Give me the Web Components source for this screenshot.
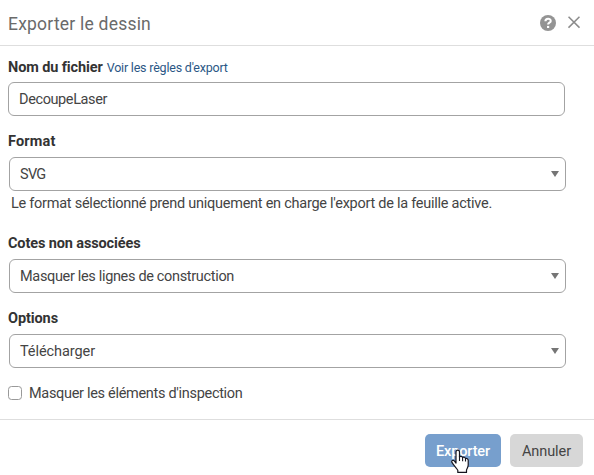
<!DOCTYPE html>
<html lang="fr">
<head>
<meta charset="utf-8">
<title>Exporter le dessin</title>
<style>
html,body{margin:0;background:#fff}
body{width:594px;height:475px;overflow:hidden;font-family:Roboto,"Liberation Sans",sans-serif;font-size:14.5px;color:#444}
</style>
</head>
<body>
<export-dialog></export-dialog>
<script>
const define = (name, html, ready) => customElements.define(name, class extends HTMLElement {
  constructor() {
    super();
    const t = document.createElement('template');
    t.innerHTML = html;
    this.attachShadow({mode: 'open'}).append(t.content.cloneNode(true));
  }
  connectedCallback() { if (ready) ready(this, this.shadowRoot); }
});

/* One line of text whose tracking is adjusted to occupy the width given in "w". */
define('fit-text', `<style>
:host{display:inline-block;white-space:nowrap;height:20px;line-height:22px}
span{display:inline-block}
</style><span><slot></slot></span>`, (el, root) => {
  const s = root.querySelector('span');
  const w = +el.getAttribute('w');
  const n = el.textContent.length;
  s.style.letterSpacing = ((w - s.getBoundingClientRect().width) / n) + 'px';
});

define('dialog-header', `<style>
:host{display:flex;box-sizing:border-box;height:46px;border-bottom:1px solid #dedede;padding:0 14px 0 8px;align-items:center;color:#6a6a6a;font-size:17.5px}
.icons{margin-left:auto;display:flex;gap:12px;align-items:center}
svg{display:block}
</style><slot></slot><div class="icons">
<svg width="16" height="16" viewBox="0 0 16 16"><circle cx="8" cy="8" r="8" fill="#949494"/><path d="M5.4 6.2C5.5 2.9 10.7 3 10.7 5.9C10.7 7.8 8.1 7.6 8.1 9.6" fill="none" stroke="#fff" stroke-width="2.1"/><rect x="7" y="10.9" width="2.2" height="2.1" fill="#fff"/></svg>
<svg width="12" height="14" viewBox="0 0 12 14"><path d="M.5.7 11.5 11.7M11.5.7.5 11.7" stroke="#8c8c8c" stroke-width="1.6"/></svg>
</div>`);

define('field-label', `<style>
:host{display:flex;height:20px;gap:4px;font-weight:700;color:#333}
::slotted([slot=link]){font-weight:400;font-size:12.5px;color:#2b5785}
</style><slot></slot><slot name="link"></slot>`);

define('text-field', `<style>
:host{display:flex;box-sizing:border-box;width:557px;height:34px;border:1px solid #a3a3a3;border-radius:6px;padding:0 10px;align-items:center;background:#fff}
</style><slot></slot>`);

define('select-field', `<style>
:host{display:flex;box-sizing:border-box;width:557px;height:34px;margin-left:1px;border:1px solid #a3a3a3;border-radius:6px;padding:0 6px 0 10px;align-items:center;justify-content:space-between;background:#fff}
</style><slot></slot><svg width="8" height="6" viewBox="0 0 8 6"><path d="M0 0H8L4 6Z" fill="#757575"/></svg>`);

define('check-field', `<style>
:host{display:flex;height:20px;align-items:center;gap:7px}
i{box-sizing:border-box;width:14px;height:14px;border:1px solid #999;border-radius:3.5px;background:#fff}
</style><i></i><slot></slot>`);

define('action-button', `<style>
:host{display:flex;box-sizing:border-box;width:73px;height:33px;border-radius:5px;background:#d7d7d7;align-items:center;justify-content:center;position:relative}
:host([primary]){width:76px;background:#779fcd;color:#fff;font-weight:500}
::slotted(hand-cursor){position:absolute;left:26px;top:15px}
</style><slot></slot>`);

define('hand-cursor', `<style>:host{display:block}svg{display:block}</style>
<svg width="18" height="25" viewBox="0 0 18 25"><path d="M5 14V3.1C5 .4 8.5.4 8.5 3.1V8C9.4 6.8 11.4 7.2 11.6 8.7C12.6 7.7 14.3 8.3 14.5 9.7C15.8 8.9 17.2 9.8 17.2 11.3V16.1C17.2 18.5 15.8 19.4 15.5 21.2V23.4H6.8V21.2C5.6 19.3 4 17.8 2.3 15.4L.8 13.2C.3 11.5 2.1 10.8 3.3 11.9Z" fill="#fff" stroke="#15151f" stroke-width="1.2" stroke-linejoin="round"/><path d="M8.5 7V12M11.6 8.5V12.3M14.5 9.5V12.6" stroke="#15151f" stroke-width="1.1"/></svg>`);

define('export-dialog', `<style>
:host{display:flex;flex-direction:column;width:594px;height:475px;background:#fff}
main{box-sizing:border-box;height:373px;padding:11px 8px 0;display:flex;flex-direction:column}
section{display:flex;flex-direction:column;gap:5px}
section.file{height:74px}
section.format{height:102px;gap:6px}
section.dims{height:75px;gap:6px}
section.options{height:75px;gap:6px}
.hint{margin:-4px 0 0 3px;height:20px}
footer{box-sizing:border-box;height:56px;border-top:1px solid #dedede;padding:14px 11px 0;display:flex;justify-content:flex-end;gap:9px}
</style>
<dialog-header><fit-text w="143">Exporter le dessin</fit-text></dialog-header>
<main>
<section class="file"><field-label><fit-text w="94.5">Nom du fichier</fit-text><fit-text slot="link" w="121">Voir les règles d'export</fit-text></field-label>
<text-field><fit-text w="88">DecoupeLaser</fit-text></text-field></section>
<section class="format"><field-label><fit-text w="47.5">Format</fit-text></field-label>
<select-field><fit-text w="25.5">SVG</fit-text></select-field>
<div class="hint"><fit-text w="481">Le format sélectionné prend uniquement en charge l'export de la feuille active.</fit-text></div></section>
<section class="dims"><field-label><fit-text w="132.5">Cotes non associées</fit-text></field-label>
<select-field><fit-text w="214">Masquer les lignes de construction</fit-text></select-field></section>
<section class="options"><field-label><fit-text w="50">Options</fit-text></field-label>
<select-field><fit-text w="75">Télécharger</fit-text></select-field></section>
<check-field><fit-text w="213.5">Masquer les éléments d'inspection</fit-text></check-field>
</main>
<footer><action-button primary><fit-text w="54">Exporter</fit-text><hand-cursor></hand-cursor></action-button><action-button><fit-text w="49">Annuler</fit-text></action-button></footer>`);
</script>
</body>
</html>
